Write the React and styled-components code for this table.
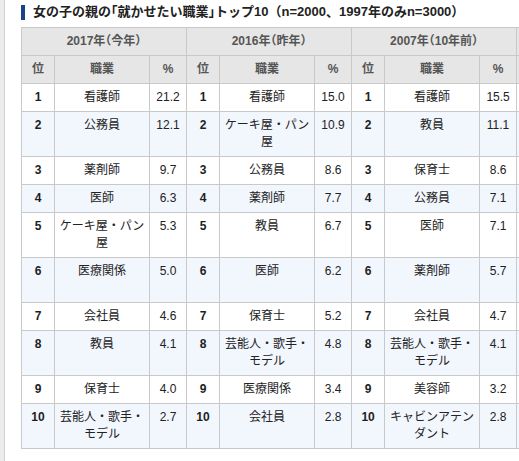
import { createGlobalStyle, styled } from "styled-components";

const GlobalStyle = createGlobalStyle`
  html, body {
    margin: 0;
    padding: 0;
    background: #fff;
    overflow: hidden;
  }
  body {
    font-family: "Liberation Sans", "Noto Sans CJK JP", sans-serif;
    color: #222;
  }
`;

const Frame = styled.div`
  min-height: 461px;
  border-left: 4px solid #ececec;
`;

const Content = styled.div`
  min-height: 461px;
  border-left: 1px solid #d2d2d2;
  padding: 3px 0 0 16px;
`;

const Title = styled.h2`
  display: flex;
  align-items: center;
  gap: 8px;
  margin: 0 0 6px;
  font-size: 13px;
  line-height: 18px;
  font-weight: bold;
  color: #222;
  white-space: nowrap;
  &::before {
    content: "";
    width: 4px;
    height: 15px;
    background: #1b4488;
  }
`;

const Bracket = styled.span`
  font-feature-settings: "halt";
`;

const Table = styled.table`
  width: 505px;
  table-layout: fixed;
  border-collapse: collapse;
  font-size: 12px;
  line-height: 17px;
`;

const Row = styled.tr`
  background: ${(p) => (p.$alt ? "#f2f6fd" : "#fff")};
  height: ${(p) => (p.$tall ? "45px" : "auto")};
`;

const HeadCell = styled.th`
  background: #e6e6e6;
  border: 1px solid #c9c9c9;
  padding: 5px 4px;
  color: #555;
  font-weight: bold;
  text-align: center;
  vertical-align: top;
  font-feature-settings: "halt";
`;

const Cell = styled.td`
  border: 1px solid #c9c9c9;
  padding: 5px 4px;
  text-align: center;
  vertical-align: top;
  font-weight: ${(p) => (p.$bold ? "bold" : "normal")};
  color: ${(p) => (p.$bold ? "#1e1e1e" : "#222")};
`;

const groups = [
  {
    label: "2017年（今年）",
    rows: [
      ["看護師", "21.2"],
      ["公務員", "12.1"],
      ["薬剤師", "9.7"],
      ["医師", "6.3"],
      ["ケーキ屋・パン屋", "5.3"],
      ["医療関係", "5.0"],
      ["会社員", "4.6"],
      ["教員", "4.1"],
      ["保育士", "4.0"],
      ["芸能人・歌手・モデル", "2.7"],
    ],
  },
  {
    label: "2016年（昨年）",
    rows: [
      ["看護師", "15.0"],
      ["ケーキ屋・パン屋", "10.9"],
      ["公務員", "8.6"],
      ["薬剤師", "7.7"],
      ["教員", "6.7"],
      ["医師", "6.2"],
      ["保育士", "5.2"],
      ["芸能人・歌手・モデル", "4.8"],
      ["医療関係", "3.4"],
      ["会社員", "2.8"],
    ],
  },
  {
    label: "2007年（10年前）",
    rows: [
      ["看護師", "15.5"],
      ["教員", "11.1"],
      ["保育士", "8.6"],
      ["公務員", "7.1"],
      ["医師", "7.1"],
      ["薬剤師", "5.7"],
      ["会社員", "4.7"],
      ["芸能人・歌手・モデル", "4.1"],
      ["美容師", "3.2"],
      ["キャビンアテンダント", "2.8"],
    ],
  },
];

// the 1997 group continues past the right edge; only its first border shows
const tallRows = [5];

export default function App() {
  return (
    <>
      <GlobalStyle />
      <Frame>
        <Content>
          <Title>
            <span>
              女の子の親の<Bracket>「</Bracket>就かせたい職業<Bracket>」</Bracket>
              トップ10（n=2000、1997年のみn=3000）
            </span>
          </Title>
          <Table>
            <colgroup>
              {groups.map((g) => [
                <col key={g.label + "a"} style={{ width: 33 }} />,
                <col key={g.label + "b"} style={{ width: 95 }} />,
                <col key={g.label + "c"} style={{ width: 37 }} />,
              ])}
              <col style={{ width: 10 }} />
            </colgroup>
            <thead>
              <tr>
                {groups.map((g) => (
                  <HeadCell key={g.label} colSpan={3}>
                    {g.label}
                  </HeadCell>
                ))}
                <HeadCell />
              </tr>
              <tr>
                {groups.map((g) => [
                  <HeadCell key={g.label + "p"}>位</HeadCell>,
                  <HeadCell key={g.label + "j"}>職業</HeadCell>,
                  <HeadCell key={g.label + "r"}>%</HeadCell>,
                ])}
                <HeadCell />
              </tr>
            </thead>
            <tbody>
              {groups[0].rows.map((_, i) => (
                <Row key={i} $alt={i % 2 === 1} $tall={tallRows.includes(i)}>
                  {groups.map((g) => [
                    <Cell key={g.label + "p"} $bold>
                      {i + 1}
                    </Cell>,
                    <Cell key={g.label + "j"}>{g.rows[i][0]}</Cell>,
                    <Cell key={g.label + "r"}>{g.rows[i][1]}</Cell>,
                  ])}
                  <Cell />
                </Row>
              ))}
            </tbody>
          </Table>
        </Content>
      </Frame>
    </>
  );
}
